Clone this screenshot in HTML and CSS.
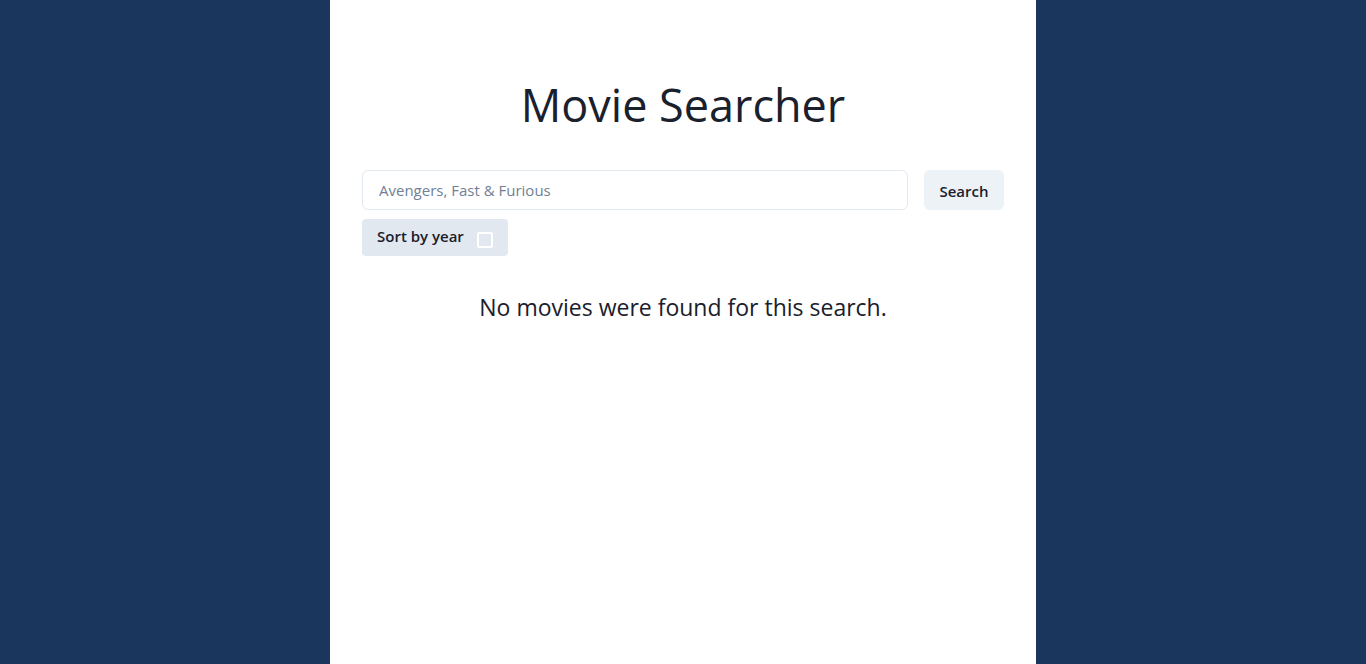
FILE: index.html
```html
<!DOCTYPE html>
<html lang="en">
<head>
<meta charset="utf-8">
<title>Movie Searcher</title>
<meta name="viewport" content="width=device-width, initial-scale=1">
<link rel="stylesheet" href="styles.css">
</head>
<body>
<main class="panel">
  <h1 class="title">Movie Searcher</h1>
  <form class="search">
    <div class="search-row">
      <input class="search-input" type="text" aria-label="Movie title" placeholder="Avengers, Fast &amp; Furious">
      <button class="search-button" type="submit">Search</button>
    </div>
    <label class="sort">
      <span class="sort-text">Sort by year</span>
      <input class="sort-box" type="checkbox">
    </label>
  </form>
  <p class="message">No movies were found for this search.</p>
</main>
</body>
</html>
```

FILE: styles.css
```css
* {
  box-sizing: border-box;
}

body {
  margin: 0;
  min-height: 100vh;
  display: flex;
  justify-content: center;
  background: #1a365d;
  color: #1a202c;
  font-family: "Segoe UI", "Open Sans", sans-serif;
  font-size: 16px;
  line-height: 24px;
}

.panel {
  width: 100%;
  max-width: 706px;
  padding: 76px 32px 32px;
  background: #fff;
}

.title {
  margin: 0 0 36px;
  font-size: 45px;
  font-weight: 400;
  line-height: 58px;
  text-align: center;
}

.search-row {
  display: flex;
  gap: 16px;
}

.search-input {
  flex: 1;
  min-width: 0;
  height: 40px;
  padding: 0 16px;
  border: 1px solid #e2e8f0;
  border-radius: 6px;
  background: #fff;
  color: inherit;
  font: inherit;
  font-size: 15px;
}

.search-input::placeholder {
  color: #718096;
  opacity: 1;
}

.search-button {
  width: 80px;
  height: 40px;
  padding: 2px 0 0;
  border: 0;
  border-radius: 6px;
  background: #edf2f7;
  color: inherit;
  font: inherit;
  font-size: 15px;
  font-weight: 600;
}

.sort {
  display: inline-flex;
  gap: 13px;
  margin-top: 9px;
  padding: 5px 15px 8px;
  border-radius: 4px;
  background: #e2e8f0;
}

.sort-text {
  font-size: 15px;
  font-weight: 600;
}

.sort-box {
  appearance: none;
  width: 16px;
  height: 16px;
  margin: 8px 0 0;
  border: 2px solid #fff;
  border-radius: 2px;
}

.sort-box:checked {
  background: #3182ce;
  border-color: #3182ce;
}

.message {
  margin: 33px 0 0;
  font-size: 23px;
  font-weight: 400;
  line-height: 36px;
  text-align: center;
}
```
